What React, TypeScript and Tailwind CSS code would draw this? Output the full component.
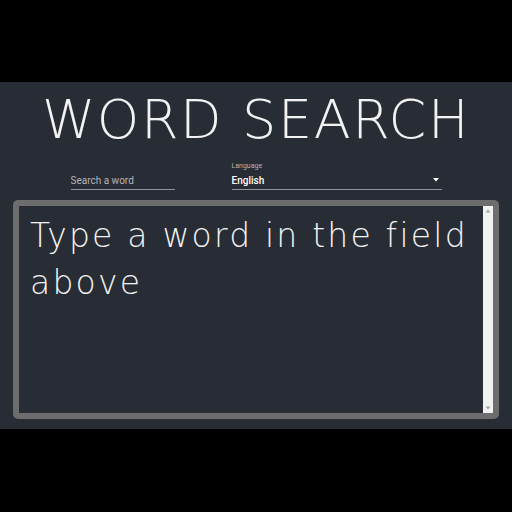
import React, { useState } from "react";

const ArrowDrop = () => (
  <svg width="6" height="4" viewBox="0 0 6 4" className="shrink-0">
    <path d="M0 0h6L3 3.5z" fill="#ffffff" />
  </svg>
);

const ScrollArrow = ({ down }: { down?: boolean }) => (
  <svg width="6" height="4" viewBox="0 0 6 4">
    <path d={down ? "M0.5 0.5h5L3 3.5z" : "M3 0.5l2.5 3h-5z"} fill="#a3a3a3" />
  </svg>
);

const App = () => {
  const [word, setWord] = useState("");

  return (
    <div className="w-[512px] h-[512px] bg-black flex flex-col overflow-hidden">
      <div className="h-[82px] shrink-0" />
      <div
        className="h-[347px] shrink-0 bg-[#282c34] flex flex-col px-[13px] pt-[11px]"
        style={{ fontFamily: "'DejaVu Sans', Inter, sans-serif" }}
      >
        <h1 className="text-center text-[54px] leading-[54px] font-extralight text-[#f2f2f2] tracking-[1.6px]">
          WORD SEARCH
        </h1>

        <div
          className="mt-[15px] flex justify-center items-end gap-[57px]"
          style={{ fontFamily: "Roboto, 'Liberation Sans', sans-serif" }}
        >
          <div className="w-[104px] h-[19px] border-b border-[#8f9399] flex items-center">
            <input
              value={word}
              onChange={(e) => setWord(e.target.value)}
              placeholder="Search a word"
              className="w-full bg-transparent outline-none text-[10px] text-white placeholder:text-[#b4b6ba]"
            />
          </div>
          <div className="w-[210px] flex flex-col">
            <span className="text-[7px] leading-[9px] text-[#b4b6ba]">
              Language
            </span>
            <div className="h-[19px] border-b border-[#8f9399] flex items-center justify-between pr-[3px]">
              <span className="text-[10px] font-medium text-white">
                English
              </span>
              <ArrowDrop />
            </div>
          </div>
        </div>

        <div className="mt-[10px] h-[219px] border-[6px] border-[#6d6d6d] rounded-[5px] flex overflow-hidden">
          <textarea
            readOnly
            value="Type a word in the field above"
            className="flex-1 resize-none bg-transparent outline-none overflow-hidden pl-[11px] pt-[6px] pr-[4px] text-[33px] leading-[47px] font-extralight text-[#f2f2f2] tracking-[2.2px]"
            style={{ fontFamily: "'DejaVu Sans', Inter, sans-serif" }}
          />
          <div className="w-[10px] bg-[#f1f1f1] flex flex-col items-center justify-between py-[3px]">
            <ScrollArrow />
            <ScrollArrow down />
          </div>
        </div>
      </div>
    </div>
  );
};

export default App;
